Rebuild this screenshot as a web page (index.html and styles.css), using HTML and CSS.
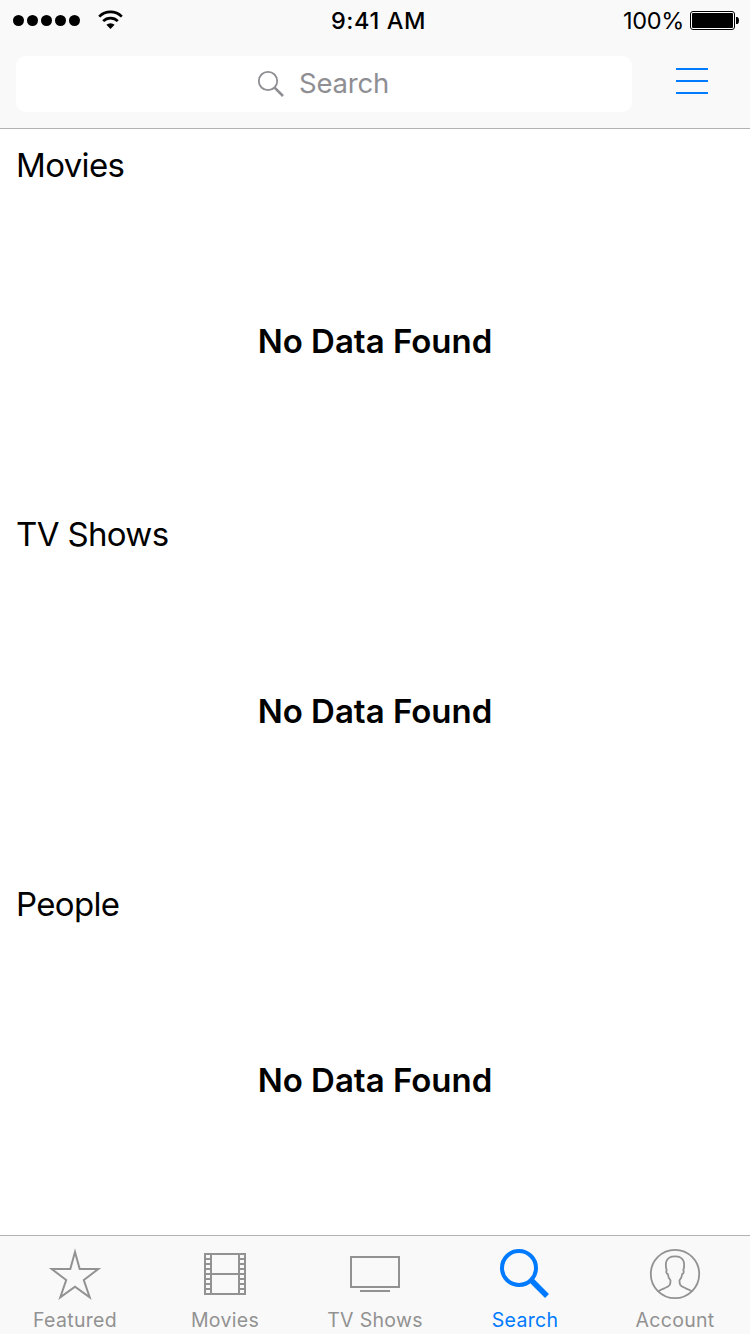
FILE: index.html
```html
<!DOCTYPE html>
<html lang="en">
<head>
<meta charset="utf-8">
<title>Search</title>
<link rel="stylesheet" href="styles.css">
</head>
<body>
<div class="screen">
  <header class="header">
    <div class="status">
      <div class="status-left">
        <div class="signal"><i></i><i></i><i></i><i></i><i></i></div>
        <svg class="wifi" width="25" height="19" viewBox="0 0 25 19">
          <g fill="none" stroke="#000" stroke-width="2.7">
            <path d="M1.2 6.6a16 16 0 0 1 22.6 0"/>
            <path d="M5.2 11.1a10.3 10.3 0 0 1 14.6 0"/>
          </g>
          <path d="M8.400 14.800a6 6 0 0 1 8.200 0L12.500 19z"/>
        </svg>
      </div>
      <span class="time">9:41 AM</span>
      <div class="status-right">
        <span class="percent">100%</span>
        <svg class="battery" width="50" height="20" viewBox="0 0 50 20">
          <rect x=".5" y=".5" width="44" height="18" rx="2.5" fill="#fff" stroke="#000"/>
          <rect x="2" y="2" width="41" height="15" rx="1"/>
          <path d="M46 6h1.5Q49 6.500 49 9.500T47.500 13H46z"/>
        </svg>
      </div>
    </div>
    <div class="toolbar">
      <div class="search-field">
        <svg width="28" height="28" viewBox="0 0 28 28" fill="none" stroke="#8e8e93">
          <circle cx="11" cy="11" r="9.2" stroke-width="1.8"/>
          <path d="M17.600 17.600L26 26" stroke-width="2.600"/>
        </svg>
        <span class="placeholder">Search</span>
      </div>
      <div class="menu"><i></i><i></i><i></i></div>
    </div>
  </header>
  <main class="results">
    <section class="group"><h2 class="group-title">Movies</h2><p class="empty">No Data Found</p></section>
    <section class="group"><h2 class="group-title">TV Shows</h2><p class="empty">No Data Found</p></section>
    <section class="group"><h2 class="group-title">People</h2><p class="empty">No Data Found</p></section>
  </main>
  <nav class="tabs">
    <div class="tab">
      <svg class="icon" viewBox="0 0 60 60"><path stroke-miterlimit="8" d="M30 8L34.700 25H53.300L38.800 36L44.700 53.300L30 42.700L15.300 53.300L21.200 36L6.700 25H25.300Z"/></svg>
      <span class="label">Featured</span>
    </div>
    <div class="tab">
      <svg class="icon" viewBox="0 0 60 60"><path d="M10 10H50V50H10ZM16 10V50M44 10V50M16 30H44M10 15H16M10 20H16M10 25H16M10 30H16M10 35H16M10 40H16M10 45H16M44 15H50M44 20H50M44 25H50M44 30H50M44 35H50M44 40H50M44 45H50"/></svg>
      <span class="label">Movies</span>
    </div>
    <div class="tab">
      <svg class="icon" viewBox="0 0 60 60"><path d="M6 13H54V43H6ZM15 47H45"/></svg>
      <span class="label">TV Shows</span>
    </div>
    <div class="tab active">
      <svg class="icon" viewBox="0 0 60 60"><circle cx="24" cy="24" r="17" stroke-width="4"/><path d="M36.300 36.300L52 52" stroke-width="5.500"/></svg>
      <span class="label">Search</span>
    </div>
    <div class="tab">
      <svg class="icon" viewBox="0 0 60 60"><g stroke-width="1.800"><circle cx="30" cy="30" r="24.200"/><path d="M13.500 47.200C16.500 44.800 22.500 43.900 24.500 41.300C25.600 39.900 25.500 38 25.500 36.300C24 34.900 23.100 32.700 22.900 30.200C21.300 29.600 20.900 27.500 21.700 26.400C20.900 23.600 20.400 20.200 21.400 17.300C22.300 14.500 25.800 12.300 30 12.300C34.200 12.300 37.700 14.500 38.600 17.300C39.600 20.200 39.100 23.600 38.300 26.400C39.100 27.500 38.700 29.600 37.100 30.200C36.900 32.700 36 34.900 34.500 36.300C34.500 38 34.400 39.900 35.500 41.300C37.500 43.900 43.500 44.800 46.500 47.200"/></g></svg>
      <span class="label">Account</span>
    </div>
  </nav>
</div>
</body>
</html>
```
FILE: styles.css
```css
* { box-sizing: border-box; }
body { margin: 0; background: #fff; color: #000; font-family: Inter, "Liberation Sans", sans-serif; }
.screen { width: 750px; height: 1334px; display: flex; flex-direction: column; overflow: hidden; }
.header { height: 129px; flex: none; background: #f9f9f9; border-bottom: 1px solid #b2b2b2; }
.status { height: 40px; display: grid; grid-template-columns: 1fr auto 1fr; align-items: start; }
.status-left { display: flex; padding-left: 13px; }
.signal { display: flex; gap: 3px; padding-top: 15px; }
.signal i { width: 11px; height: 11px; border-radius: 50%; background: #000; }
.wifi { margin: 10px 0 0 18px; }
.time { padding-left: 7px; font-size: 23.500px; line-height: 41px; font-weight: 550; letter-spacing: .6px; white-space: nowrap; }
.status-right { display: flex; justify-content: flex-end; padding-right: 10px; }
.percent { font-size: 23.500px; line-height: 41px; letter-spacing: -.3px; }
.battery { margin: 11px 0 0 6px; }
.toolbar { display: flex; padding: 16px 42px 0 16px; justify-content: space-between; }
.search-field { width: 616px; height: 56px; border-radius: 10px; background: #fff; display: flex; align-items: center; padding-left: 241px; gap: 14px; }
.placeholder { color: #8e8e93; font-size: 27.500px; letter-spacing: -.2px; padding-bottom: 2px; }
.menu { width: 32px; padding-top: 12px; display: flex; flex-direction: column; gap: 10px; }
.menu i { height: 2px; background: #007aff; }
.results { flex: 1; min-height: 0; overflow: hidden; }
.group { height: 369.300px; }
.group-title { margin: 0; padding: 14px 0 0 16px; font-size: 33px; line-height: 44px; font-weight: 400; letter-spacing: -.65px; }
.empty { margin: 132.400px 0 0; text-align: center; font-size: 33px; line-height: 44px; font-weight: 600; }
.tabs { height: 99px; flex: none; display: flex; background: #f9f9f9; border-top: 1px solid #b2b2b2; }
.tab { width: 150px; display: flex; flex-direction: column; align-items: center; padding-top: 8px; color: #929292; }
.tab.active { color: #007aff; }
.icon { width: 60px; height: 60px; fill: none; stroke: currentColor; stroke-width: 2; flex: none; }
.label { margin-top: 4px; font-size: 19.500px; line-height: 24px; letter-spacing: .3px; }
```
